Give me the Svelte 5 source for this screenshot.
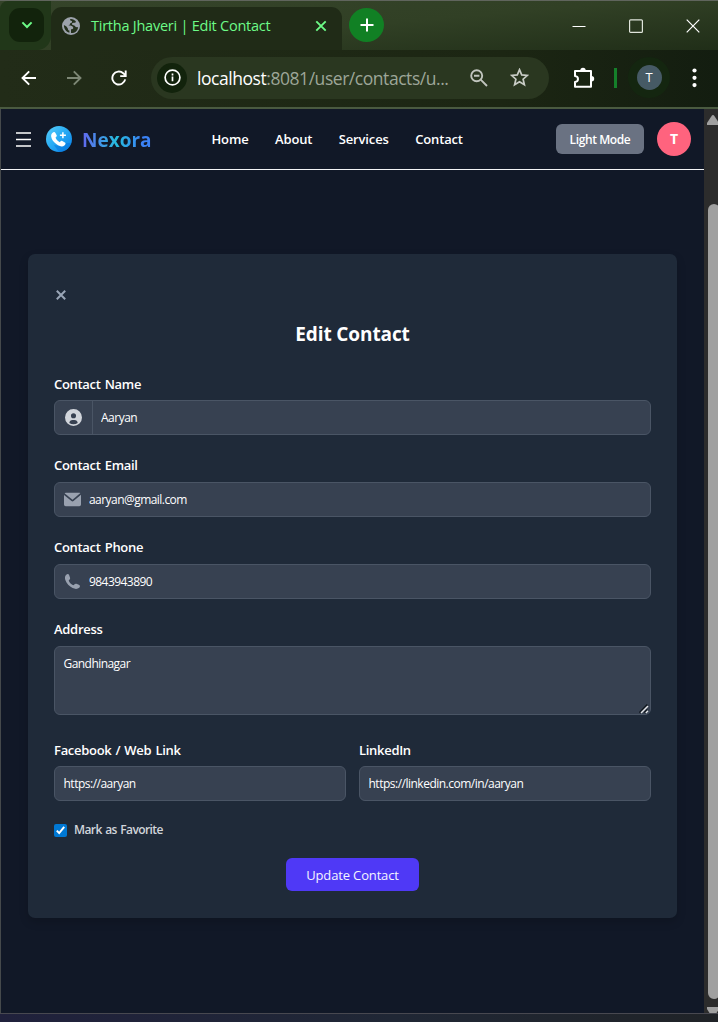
<script>
  let name = $state('Aaryan');
  let email = $state('aaryan@gmail.com');
  let phone = $state('9843943890');
  let address = $state('Gandhinagar');
  let web = $state('https://aaryan');
  let linkedin = $state('https://linkedin.com/in/aaryan');
  let favorite = $state(true);
</script>

<div class="window">
  <div class="tabs">
    <div class="corner left"><button class="search" aria-label="Search tabs">
      <svg width="12" height="8" viewBox="0 0 12 8" fill="none" stroke="#6cfb87" stroke-width="2"><path d="M1.4 1.4 6 6l4.6-4.6" /></svg>
    </button></div>
    <div class="tab">
      <svg width="18" height="18" viewBox="0 0 18 18"><circle cx="9" cy="9" r="9" fill="#9ca2ab" /><path d="M8.2 2c-.3 1 .2 2 1.8 2.1 0 1.500-.3 2.100-1.800 2.200-.2 1.500-.8 2-2.100 2.200 2.700-.1 5 .4 5.200 2.300 0 1.200-.9 1.500-2.300 1.500v3.800c3.900.2 6.900-2.300 7.100-6.200-1.400.7-2.800.3-3.200-.8-.5-1.100-2.200-.6-2.800-1.500-.5-1.100.4-2 1.700-1.900 1.200.2 2.200-.4 2-1.500C12.600 2.700 10.400 1.600 8.200 2ZM1.900 8c0 3.800 2.300 6.900 5.500 7.800v-2.200c-1-.1-1.500-.6-1.500-1.800C5.500 10.300 3.700 8.700 1.900 8Z" fill="#24301c" /></svg>
      <span class="tab-title">Tirtha Jhaveri | Edit Contact</span>
      <svg class="tab-close" width="12" height="12" viewBox="0 0 12 12" stroke="#6cfb87" stroke-width="1.9"><path d="m1.3 1.3 9.4 9.4M10.7 1.3l-9.4 9.4" /></svg>
    </div>
    <div class="corner right"><button class="add" aria-label="New tab">
      <svg width="14" height="14" viewBox="0 0 14 14" stroke="#fff" stroke-width="2"><path d="M7 .5v13M.5 7h13" /></svg>
    </button></div>
    <div class="controls">
      <svg width="14" height="14" viewBox="0 0 14 14" stroke="#fff"><path d="M.5 7.5h13" /></svg>
      <svg width="14" height="14" viewBox="0 0 14 14" fill="none" stroke="#e0e5dc" stroke-width="1.2"><rect x=".6" y=".8" width="12.8" height="12.6" rx="1" /></svg>
      <svg width="14" height="14" viewBox="0 0 14 14" stroke="#fff" stroke-width="1.2"><path d="m.7.7 12.6 12.6M13.3.7.7 13.3" /></svg>
    </div>
  </div>

  <div class="toolbar">
    <svg class="back" width="16" height="16" viewBox="0 0 16 16" fill="none" stroke="#fff" stroke-width="1.9"><path d="M15 8H1.8M8.2 1.3 1.5 8l6.7 6.7" /></svg>
    <svg class="forward" width="16" height="16" viewBox="0 0 16 16" fill="none" stroke="#7d8775" stroke-width="1.9"><path d="M1 8h13.2M7.8 1.3 14.5 8l-6.7 6.7" /></svg>
    <svg class="reload" width="16" height="16" viewBox="0 0 16 16" fill="none" stroke="#fff" stroke-width="1.9"><path d="M14.2 9.400A6.500 6.500 0 1 1 12.200 3.200l2.200 2.200M14.700.6v5.500H9.200" /></svg>
    <div class="address">
      <span class="info"><svg width="17" height="17" viewBox="0 0 17 17" fill="none" stroke="#fff" stroke-width="1.7"><circle cx="8.5" cy="8.5" r="7.4" /><path d="M8.5 7.6v4.7M8.5 4.6v1.8" /></svg></span>
      <span class="url"><b>localhost</b>:8081/user/contacts/u...</span>
      <svg class="zoom" width="18" height="18" viewBox="0 0 18 18" fill="none" stroke="#c1c5be" stroke-width="1.9"><circle cx="6.7" cy="6.7" r="5.5" /><path d="m10.7 10.7 6.3 6.3M4 6.7h5.4" /></svg>
      <svg class="star" width="19" height="19" viewBox="0 0 19 19" fill="none" stroke="#c8ccc5" stroke-width="1.7"><path d="m9.500 1.700 2.200 5.200 5.700.5-4.300 3.800 1.300 5.600-4.900-3-4.900 3 1.300-5.600-4.300-3.800 5.700-.5Z" /></svg>
    </div>
    <svg class="puzzle" width="22" height="22" viewBox="0 0 22 22" fill="none" stroke="#fff" stroke-width="2"><path d="M2 4h16v15.700H2v-4.800c4-.4 4-5.600 0-6V4Z" stroke-linejoin="round" /><path d="M7.300 3.400a2.700 2.700 0 0 1 5.400 0ZM18.500 9.100a2.700 2.700 0 0 1 0 5.400Z" fill="#fff" stroke="none" /></svg>
    <span class="divider"></span>
    <span class="profile"><span>T</span></span>
    <svg class="dots" width="5" height="20" viewBox="0 0 5 20" fill="#fff"><circle cx="2.5" cy="2.5" r="2.1" /><circle cx="2.5" cy="9.8" r="2.1" /><circle cx="2.5" cy="17.1" r="2.1" /></svg>
  </div>

  <div class="viewport">
    <div class="page">
      <header>
        <svg class="menu" width="15" height="15" viewBox="0 0 15 15" stroke="#fff" stroke-width="1.7"><path d="M0 1h15M0 7.5h15M0 14h15" /></svg>
        <svg class="logo" width="26" height="26" viewBox="0 0 26 26">
          <defs><linearGradient id="logo-fill" x1="0" y1="0" x2="1" y2="1"><stop offset="0" stop-color="#5bd0fb" /><stop offset=".45" stop-color="#29adf5" /><stop offset="1" stop-color="#087ee8" /></linearGradient></defs>
          <circle cx="13" cy="13" r="13" fill="url(#logo-fill)" />
          <path d="M17 20.5 20 17l5.2 0A13 13 0 0 1 13 26l-5-7Z" fill="#0878df" opacity=".55" />
          <path d="M6.3 7.1c1.1-1.2 2.3-1.4 3-.4l1.4 2.6c.4.8-.1 1.3-1.2 2.3.8 2 2.2 3.5 4.3 4.6 1-1.2 1.7-1.7 2.5-1.2l2.6 1.5c1.1.7.7 1.9-.5 3-1.8 1.6-4.7 1.2-7.8-1.2-3.1-2.3-5-5-5.4-7.6-.2-1.5.2-2.6 1.1-3.6Z" fill="#fff" />
          <path d="M16.9 6.2v6M13.9 9.2h6" stroke="#fff" stroke-width="1.5" />
        </svg>
        <span class="brand">Nexora</span>
        <nav><a href="#home">Home</a><a href="#about">About</a><a href="#services">Services</a><a href="#contact">Contact</a></nav>
        <button class="mode">Light Mode</button>
        <span class="avatar">T</span>
      </header>

      <main>
        <button class="close" aria-label="Close"><svg width="10" height="10" viewBox="0 0 10 10" stroke="#99a5b6" stroke-width="2"><path d="m.8.8 8.4 8.4M9.2.8.8 9.2" /></svg></button>
        <h1>Edit Contact</h1>

        <label for="name">Contact Name</label>
        <div class="field">
          <span class="addon"><svg width="17" height="17" viewBox="0 0 20 20" fill="#d1d5db"><path d="M10 0a10 10 0 1 0 10 10A10.011 10.011 0 0 0 10 0Zm0 5a3 3 0 1 1 0 6 3 3 0 0 1 0-6Zm0 13a8.949 8.949 0 0 1-4.951-1.488A3.987 3.987 0 0 1 9 13h2a3.987 3.987 0 0 1 3.951 3.512A8.949 8.949 0 0 1 10 18Z" /></svg></span>
          <input id="name" bind:value={name} />
        </div>

        <label for="email">Contact Email</label>
        <div class="field">
          <span class="icon"><svg width="17" height="17" viewBox="0 0 20 16" fill="#99a1af"><path d="m10.036 8.278 9.258-7.79A1.979 1.979 0 0 0 18 0H2A1.987 1.987 0 0 0 .641.541l9.395 7.737Z" /><path d="M11.241 9.817c-.36.275-.801.425-1.255.427-.428 0-.845-.138-1.187-.395L0 2.6V14a2 2 0 0 0 2 2h16a2 2 0 0 0 2-2V2.5l-8.759 7.317Z" /></svg></span>
          <input id="email" bind:value={email} />
        </div>

        <label for="phone">Contact Phone</label>
        <div class="field">
          <span class="icon"><svg width="17" height="17" viewBox="0 0 18 18" fill="#99a1af"><path d="M2.4 1.9C3.5.8 5 .9 5.5 2.3l.9 2.6c.3.9-.1 1.6-.8 2.2-.6.5-.6 1-.3 1.6.9 1.8 2.2 3.1 4 4 .6.3 1.1.2 1.6-.4.7-.8 1.3-1.1 2.2-.8l2.6.9c1.4.5 1.6 2 .4 3.2-1.6 1.5-4.2 1.6-7 .4C5.6 14.3 2.7 11.2 1.4 7.5.7 5.3.9 3.3 2.4 1.9Z" /></svg></span>
          <input id="phone" bind:value={phone} />
        </div>

        <label for="address">Address</label>
        <div class="field area">
          <textarea id="address" bind:value={address}></textarea>
          <svg class="grip" width="10" height="10" viewBox="0 0 10 10"><path d="M.5 8.800 8.500.8M5.500 8.800l3-3" stroke="#111820" stroke-width="2" /><path d="m2 9 7-7M6.800 9 9 6.800" stroke="#e2e4e8" stroke-width="1.500" /></svg>
        </div>

        <div class="links">
          <div><label for="web">Facebook / Web Link</label><div class="field"><input id="web" bind:value={web} /></div></div>
          <div><label for="linkedin">LinkedIn</label><div class="field"><input id="linkedin" bind:value={linkedin} /></div></div>
        </div>

        <label class="favorite">
          <input type="checkbox" bind:checked={favorite} />
          <span class="box">{#if favorite}<svg width="13" height="13" viewBox="0 0 13 13" fill="none" stroke="#fff" stroke-width="2"><path d="m2.8 6.6 2.4 2.5 5-6.2" /></svg>{/if}</span>
          <span>Mark as Favorite</span>
        </label>
        <button class="submit">Update Contact</button>
      </main>
    </div>
    <div class="scrollbar">
      <svg class="up" width="12" height="10" viewBox="0 0 12 10"><path d="M6 0c.6 0 1 .5 1.4 1L12 8v2H0V8l4.600-7C5 .5 5.400 0 6 0Z" fill="#a0a0a0" /></svg>
      <span class="thumb"></span>
      <svg class="down" width="12" height="6" viewBox="0 0 12 6"><path d="M0 0h12v2L9.500 6H2.500L0 2Z" fill="#a0a0a0" /></svg>
    </div>
  </div>
  <div class="desktop"></div>
</div>

<style>
  :global(body) { margin: 0; background: #111827; }
  * { box-sizing: border-box; }
  svg { display: block; flex: none; }
  button { border: 0; padding: 0; font: inherit; color: inherit; }
  .window { width: 718px; height: 1022px; overflow: hidden; display: flex; flex-direction: column; font-family: "Open Sans", "Noto Sans", sans-serif; color: #fff; background: #20291c; }
  .tabs { height: 50px; flex: none; display: flex; background: linear-gradient(175deg, #35442a 0%, #314025 50%, #202e18 100%); border-top: 1px solid #60655d; }
  .corner { background: transparent; }
  .left { width: 51px; padding: 7px 0 0 9px; background: #213719; border-radius: 8px 0 14px 0; }
  .search { width: 35px; height: 34px; border-radius: 11px; background: #12230c; display: grid; place-items: center; }
  .tab { width: 291px; margin-top: 6px; border-radius: 11px 11px 0 0; background: #202b17; display: flex; align-items: center; padding: 0 15px 6px 11px; }
  .tab-title { color: #6cfb87; font-size: 14.500px; letter-spacing: -.24px; margin-left: 11px; white-space: nowrap; }
  .tab-close { margin-left: auto; }
  .right { padding: 7px 0 0 7px; }
  .add { width: 35px; height: 34px; border-radius: 50%; background: #118024; display: grid; place-items: center; }
  .controls { margin: 18px 18px 0 auto; display: flex; gap: 43px; }
  .toolbar { height: 59px; flex: none; display: flex; align-items: center; padding: 0 20px 2px 21px; background: linear-gradient(90deg, #222c18, #1c2613 70%, #131d10); border-bottom: 2px solid #4a5a40; }
  .forward { margin-left: 29px; }
  .reload { margin-left: 29px; }
  .address { width: 398px; height: 42px; margin-left: 24px; padding: 0 20px 0 6px; border-radius: 21px; background: #2a3720; display: flex; align-items: center; flex: none; }
  .info { width: 30px; height: 30px; border-radius: 50%; background: #12230c; display: grid; place-items: center; }
  .url { width: 254px; margin-left: 10px; color: #9da698; font-size: 17.500px; letter-spacing: -.45px; white-space: nowrap; padding-top: 1px; }
  .url b { font-weight: 400; color: #fff; }
  .zoom { margin-left: 19px; }
  .star { margin-left: auto; }
  .puzzle { margin-left: 24px; }
  .divider { width: 3px; height: 20px; background: #15802a; margin-left: 19px; }
  .profile { width: 42px; height: 41px; border-radius: 50%; background: #142610; display: grid; place-items: center; margin-left: 11px; }
  .profile span { width: 25px; height: 25px; border-radius: 50%; background: #465a65; font-size: 13px; line-height: 25px; text-align: center; }
  .dots { margin-left: 22px; }
  .viewport { height: 904px; flex: none; display: flex; border-left: 1px solid #45494b; }
  .page { width: 703px; background: #111827; }
  header { height: 61px; border-bottom: 1px solid #f3f4f6; display: flex; align-items: center; padding: 0 13px 0 15px; }
  .menu { margin-top: 1px; }
  .logo { margin-left: 15px; }
  .brand { width: 70px; margin: 2px 0 0 10px; font-size: 19px; line-height: 28px; font-weight: 700; letter-spacing: 0; color: transparent; background: linear-gradient(90deg, #6267ef 0%, #25bddf 50%, #3b82f6 85%); background-clip: text; }
  nav { display: flex; gap: 26.500px; margin-left: 59.500px; font-size: 13px; letter-spacing: -.15px; font-weight: 600; }
  nav a { color: #fff; text-decoration: none; }
  .mode { width: 88px; height: 30px; margin-left: auto; border-radius: 6px; background: #6a7282; font-size: 12px; letter-spacing: -.4px; font-weight: 600; }
  .avatar { width: 34px; height: 34px; border-radius: 50%; background: #ff637e; margin-left: 13px; text-align: center; line-height: 34px; font-size: 14px; font-weight: 700; }
  main { width: 649px; height: 664px; margin: 84px 0 0 27px; padding: 35px 26px 0; border-radius: 7px; background: #1f2a39; box-shadow: 0 4px 10px rgb(0 0 0 / .16); display: flex; flex-direction: column; }
  .close { width: 14px; height: 12px; background: transparent; display: grid; place-items: center; }
  h1 { margin: 19px 0 26px; font-size: 19px; line-height: 28px; letter-spacing: -.1px; font-weight: 700; text-align: center; }
  label { display: block; height: 20px; line-height: 20px; margin-bottom: 7px; font-size: 13px; font-weight: 600; letter-spacing: -.3px; word-spacing: 1px; }
  h1 + label, .links label { margin-bottom: 6px; }
  .field { height: 35px; flex: none; border: 1px solid #4a5565; background: #374151; border-radius: 6px; display: flex; align-items: center; margin-bottom: 20px; }
  .addon { width: 38px; height: 33px; display: grid; place-items: center; border-right: 1px solid #4a5565; }
  .icon { padding-left: 9px; }
  .field input, textarea { appearance: none; border: 0; outline: 0; background: transparent; color: #fff; font: 12px "Open Sans", sans-serif; letter-spacing: -.55px; flex: 1; min-width: 0; height: 33px; padding: 0 8px; }
  .addon + input { letter-spacing: -.5px; }
  .links .field { margin-bottom: 21px; }
  .links .field input { padding-left: 8.500px; letter-spacing: -.5px; }
  .area { height: 69px; margin-bottom: 25px; position: relative; }
  textarea { height: 67px; resize: none; padding: 8px 8.500px; line-height: 18px; }
  .grip { position: absolute; right: 1px; bottom: 0; }
  .links { display: grid; grid-template-columns: 1fr 1fr; gap: 13px; }
  .favorite { display: flex; align-items: center; gap: 7px; font-size: 12px; color: #d1d5db; letter-spacing: -.6px; margin: -2px 0 0; }
  .favorite input { position: absolute; opacity: 0; }
  .box { width: 13px; height: 13px; border-radius: 2px; background: #0078d4; }
  .submit { width: 133px; height: 33px; flex: none; align-self: center; margin-top: 18px; border-radius: 6px; background: #4f39f6; color: #f3f4ff; font-size: 13px; letter-spacing: -.15px; }
  .scrollbar { width: 14px; background: #2c2c2c; overflow: hidden; display: flex; flex-direction: column; align-items: flex-start; padding: 6px 0 0 3px; }
  .thumb { width: 12px; height: 795px; margin: 79px 0 8px 1px; border-radius: 6px; background: #a0a0a0; flex: none; }
  .desktop { height: 9px; flex: none; border-top: 1px solid #484850; background: linear-gradient(90deg, #20213c, #202735 55%, #202327); }
</style>
